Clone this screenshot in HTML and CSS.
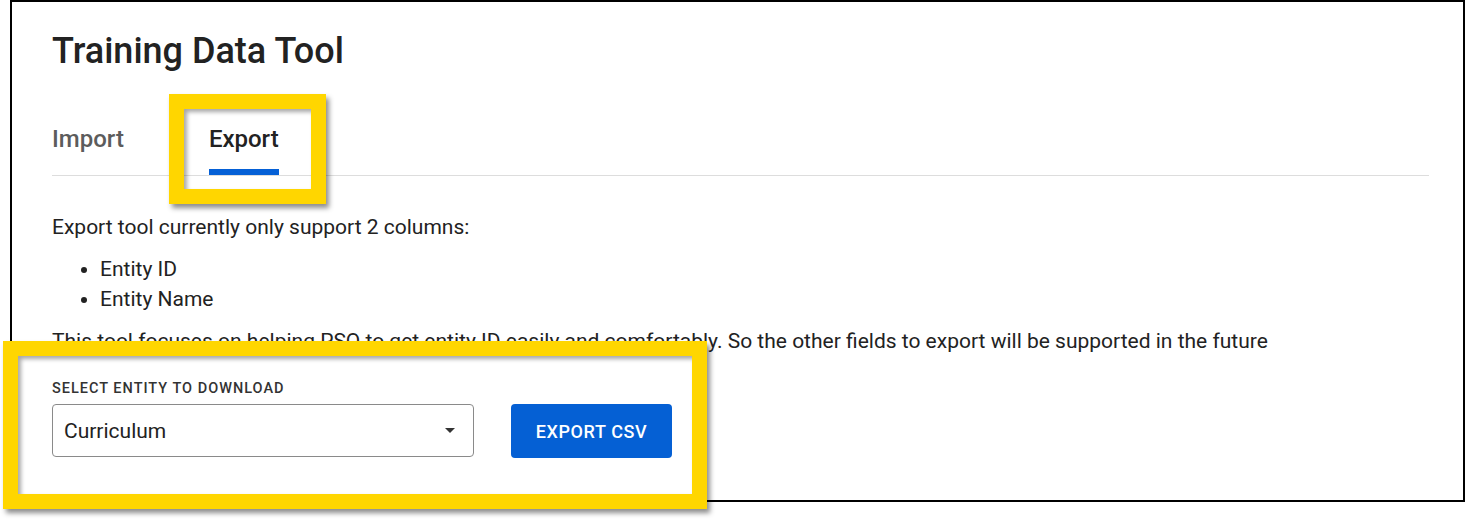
FILE: index.html
```html
<!DOCTYPE html>
<html lang="en">
<head>
<meta charset="utf-8">
<title>Training Data Tool</title>
<link rel="stylesheet" href="styles.css">
</head>
<body>
<div class="frame">
  <h1 class="title">Training Data Tool</h1>
  <div class="tabs">
    <div class="tab">Import</div>
    <div class="tab tab-active">Export</div>
  </div>
  <p class="text first">Export tool currently only support 2 columns:</p>
  <ul class="list">
    <li>Entity ID</li>
    <li>Entity Name</li>
  </ul>
  <p class="text">This tool focuses on helping PSO to get entity ID easily and comfortably. So the other fields to export will be supported in the future</p>
  <div class="form">
    <div class="field">
      <div class="label">SELECT ENTITY TO DOWNLOAD</div>
      <div class="select">
        <span class="select-value">Curriculum</span>
        <span class="caret"></span>
      </div>
    </div>
    <button class="btn">EXPORT CSV</button>
  </div>
</div>
<div class="highlight hl-tab"></div>
<div class="highlight hl-form"></div>
</body>
</html>
```

FILE: styles.css
```css
* { box-sizing: border-box; }

body {
  margin: 0;
  background: #ffffff;
  font-family: Roboto, "Noto Sans", Arial, sans-serif;
  color: #222222;
}

.frame {
  margin-left: 10px;
  width: 1455px;
  height: 502px;
  border: 2px solid #000000;
  padding: 28px 34px 0 40px;
  overflow: hidden;
}

.title {
  margin: 0;
  font-size: 36px;
  line-height: 42px;
  font-weight: 500;
  color: #222222;
}

.tabs {
  display: flex;
  gap: 85px;
  margin-top: 53px;
  border-bottom: 1px solid #dddddd;
}

.tab {
  font-size: 24px;
  line-height: 28px;
  font-weight: 500;
  color: #5c5c5c;
  padding-bottom: 22px;
}

.tab-active {
  color: #222222;
  padding-bottom: 16px;
  border-bottom: 6px solid #0560d6;
}

.text {
  margin: 12px 0 0;
  font-size: 21px;
  line-height: 30px;
}

.text.first { margin-top: 36px; }

.list {
  margin: 12px 0 0;
  padding-left: 48px;
  font-size: 21px;
  line-height: 30px;
}

.form {
  display: flex;
  align-items: flex-end;
  gap: 37px;
  margin-top: 23px;
}

.field {
  display: flex;
  flex-direction: column;
  gap: 5px;
}

.label {
  font-size: 14.5px;
  line-height: 20px;
  font-weight: 500;
  letter-spacing: 1px;
  color: #333333;
}

.select {
  width: 422px;
  height: 53px;
  border: 1px solid #8a8a8a;
  border-radius: 4px;
  display: flex;
  align-items: center;
  justify-content: space-between;
  padding: 0 18px 0 11px;
}

.select-value {
  font-size: 21px;
  color: #222222;
}

.caret {
  width: 0;
  height: 0;
  border-left: 5px solid transparent;
  border-right: 5px solid transparent;
  border-top: 5px solid #333333;
}

.btn {
  width: 161px;
  height: 54px;
  border: none;
  border-radius: 4px;
  background: #0560d4;
  color: #ffffff;
  font-family: Roboto, "Noto Sans", Arial, sans-serif;
  font-size: 18px;
  font-weight: 500;
  letter-spacing: 0.6px;
  margin-bottom: -1px;
}

.highlight {
  position: absolute;
  border: 15px solid #ffd600;
  box-shadow: 3px 4px 5px rgba(0, 0, 0, 0.45), inset 3px 3px 4px rgba(0, 0, 0, 0.35);
}

.hl-tab {
  left: 169px;
  top: 94px;
  width: 157px;
  height: 110px;
}

.hl-form {
  left: 3px;
  top: 341px;
  width: 704px;
  height: 168px;
}
```
